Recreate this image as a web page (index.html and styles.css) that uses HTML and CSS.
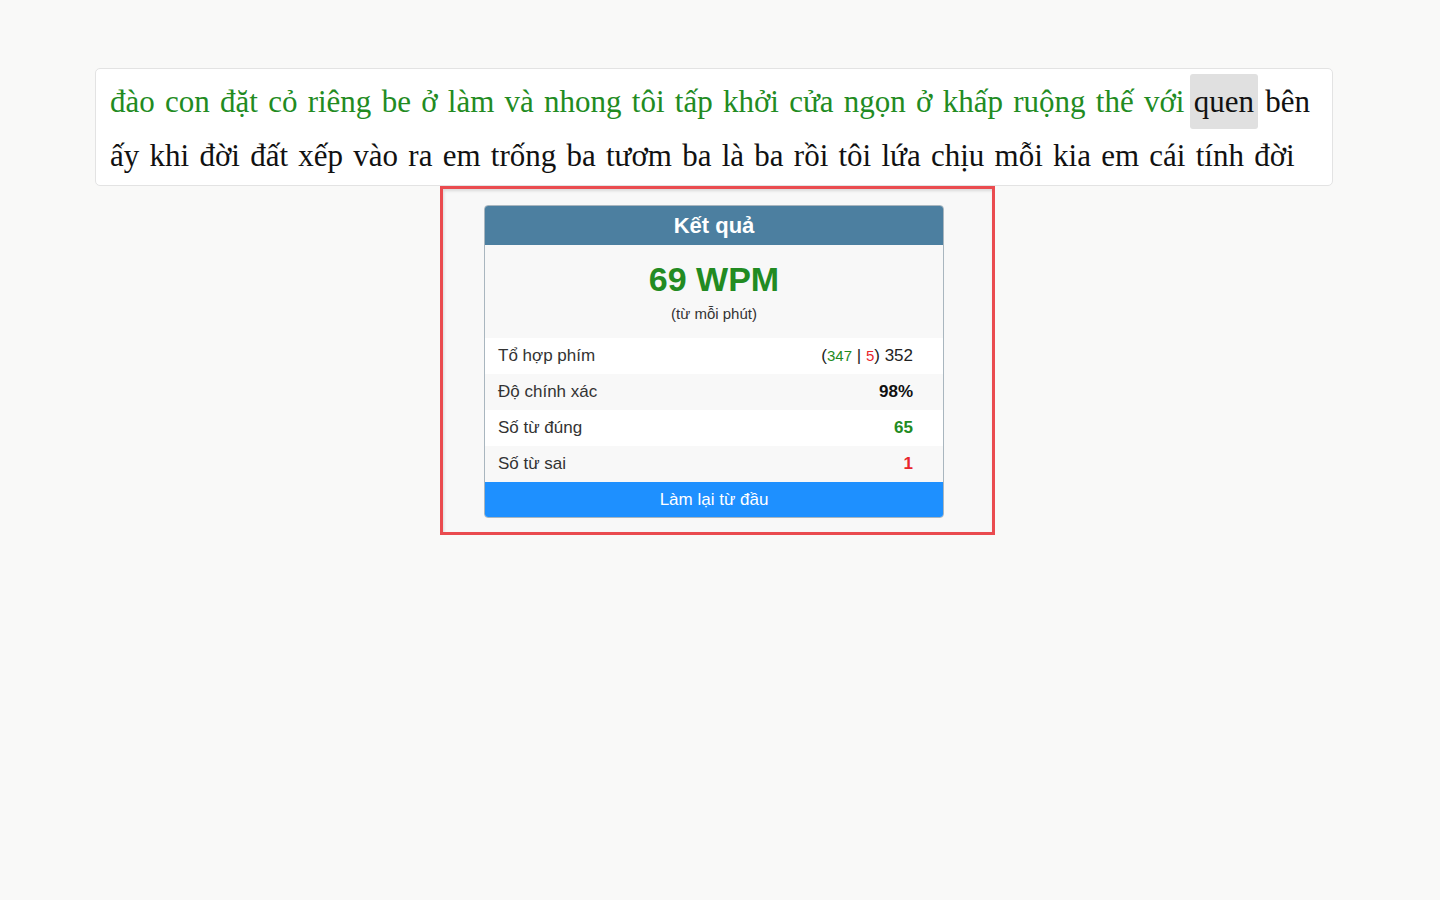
FILE: index.html
```html
<!DOCTYPE html>
<html lang="vi">
<head>
    <meta charset="UTF-8">
    <meta name="viewport" content="width=device-width, initial-scale=1.0">
    <title>Luyện gõ phím</title>
    <link rel="stylesheet" href="styles.css">
</head>

<body>
    <main class="khung">
        <!-- Đoạn văn cần gõ -->
        <div class="doan-van">
            <span class="dung">đào</span> <span class="dung">con</span> <span class="dung">đặt</span> <span class="dung">cỏ</span> <span class="dung">riêng</span> <span class="dung">be</span> <span class="dung">ở</span> <span class="dung">làm</span> <span class="dung">và</span> <span class="dung">nhong</span> <span class="dung">tôi</span> <span class="dung">tấp</span> <span class="dung">khởi</span> <span class="dung">cửa</span> <span class="dung">ngọn</span> <span class="dung">ở</span> <span class="dung">khấp</span> <span class="dung">ruộng</span> <span class="dung">thế</span> <span class="dung">với</span> <span class="hien-tai">quen</span> <span>bên</span> <span>ấy</span> <span>khi</span> <span>đời</span> <span>đất</span> <span>xếp</span> <span>vào</span> <span>ra</span> <span>em</span> <span>trống</span> <span>ba</span> <span>tươm</span> <span>ba</span> <span>là</span> <span>ba</span> <span>rồi</span> <span>tôi</span> <span>lứa</span> <span>chịu</span> <span>mỗi</span> <span>kia</span> <span>em</span> <span>cái</span> <span>tính</span> <span>đời</span>
        </div>

        <!-- Bảng kết quả -->
        <section class="vung-ket-qua">
            <div class="ket-qua">
                <h3 class="ket-qua-tieu-de">Kết quả</h3>
                <div class="toc-do">
                    <p class="wpm">69 WPM</p>
                    <p class="wpm-ghi-chu">(từ mỗi phút)</p>
                </div>
                <table class="bang-so-lieu">
                    <tr>
                        <td>Tổ hợp phím</td>
                        <td class="so">(<span class="nho xanh">347</span> | <span class="nho do">5</span>) 352</td>
                    </tr>
                    <tr>
                        <td>Độ chính xác</td>
                        <td class="so"><strong>98%</strong></td>
                    </tr>
                    <tr>
                        <td>Số từ đúng</td>
                        <td class="so"><strong class="xanh">65</strong></td>
                    </tr>
                    <tr>
                        <td>Số từ sai</td>
                        <td class="so"><strong class="do">1</strong></td>
                    </tr>
                </table>
                <button class="nut-lam-lai">Làm lại từ đầu</button>
            </div>
        </section>
    </main>
</body>
</html>
```

FILE: styles.css
```css
/* Chung */
body {
    margin: 0;
    background: #f9f9f8;
    color: #333;
    font-family: 'Liberation Sans', Arial, sans-serif;
}

.khung {
    width: 1238px;
    margin: 68px 0 0 95px;
}

/* Đoạn văn */
.doan-van {
    background: #fff;
    border: 1px solid #e3e3e3;
    border-radius: 5px;
    padding: 6px 14px 2px;
    font-family: 'Liberation Serif', 'Times New Roman', serif;
    font-size: 31px;
    line-height: 54px;
    word-spacing: 2.5px;
    color: #111;
}

.doan-van .dung {
    color: #228b22;
}

/* Từ đang gõ */
.doan-van .hien-tai {
    background: #e0e0e0;
    border-radius: 3px;
    padding: 10px 4px;
    margin: 0 -3px 0 -5px;
}

/* Kết quả */
.vung-ket-qua {
    box-sizing: border-box;
    width: 555px;
    margin-left: 345px;
    border: 3px solid #ea4b4f;
    padding: 16px 48px 14px 41px;
    background: #f8f8f8;
    box-shadow: inset 1px 2px 3px rgba(0, 0, 0, 0.12);
}

.ket-qua {
    width: 460px;
    border: 1px solid #a9b6bf;
    border-radius: 4px;
    background: #f8f8f8;
    overflow: hidden;
    box-sizing: border-box;
}

.ket-qua-tieu-de {
    margin: 0;
    height: 39px;
    line-height: 39px;
    background: #4c7fa0;
    color: #fff;
    text-align: center;
    font-size: 22px;
}

.toc-do {
    text-align: center;
    padding: 14px 0 9px;
}

.wpm {
    margin: 0;
    font-size: 34px;
    font-weight: bold;
    color: #228b22;
    line-height: 40px;
}

.wpm-ghi-chu {
    margin: 0;
    font-size: 15px;
    line-height: 30px;
    color: #333;
}

.bang-so-lieu {
    width: 100%;
    border-collapse: collapse;
    font-size: 17px;
}

.bang-so-lieu td {
    height: 36px;
    padding: 0 30px 0 13px;
}

.bang-so-lieu tr:nth-child(odd) {
    background: #fff;
}

.bang-so-lieu tr:nth-child(even) {
    background: #f8f8f8;
}

.bang-so-lieu .so {
    text-align: right;
    color: #222;
}

.bang-so-lieu strong {
    color: #111;
}

.nho {
    font-size: 15px;
}

.xanh,
.bang-so-lieu strong.xanh {
    color: #228b22;
}

.do,
.bang-so-lieu strong.do {
    color: #e8262c;
}

.nut-lam-lai {
    display: block;
    width: 100%;
    height: 35px;
    border: none;
    background: #1e90ff;
    color: #fff;
    font-family: inherit;
    font-size: 17px;
    cursor: pointer;
}
```
